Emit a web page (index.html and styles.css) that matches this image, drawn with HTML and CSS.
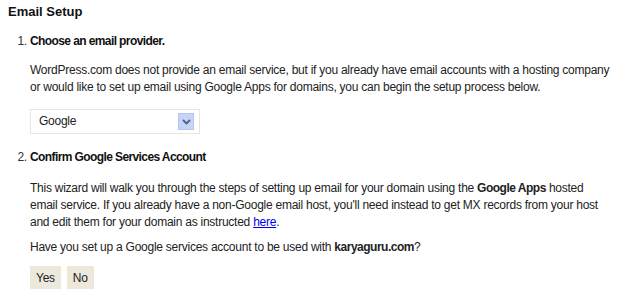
FILE: index.html
```html
<!DOCTYPE html>
<html lang="en">
<head>
 <meta charset="UTF-8" />
 <title>Email Setup</title>
 <link rel="stylesheet" href="styles.css">
</head>
<body>
 <h2 class="title">Email Setup</h2>

 <ol class="steps">
   <li>
     <h3>Choose an email provider.</h3>
     <p class="intro">WordPress.com does not provide an email service, but if you already have email accounts with a hosting company or would like to set up email using Google Apps for domains, you can begin the setup process below.</p>
     <div class="select">
       <span class="select-value">Google</span>
       <span class="select-arrow">
         <svg width="9" height="6" viewBox="0 0 9 6"><path d="M1 1 L4.5 4.5 L8 1" fill="none" stroke="#4d6185" stroke-width="1.8"/></svg>
       </span>
     </div>
   </li>
   <li>
     <h3>Confirm Google Services Account</h3>
     <p>This wizard will walk you through the steps of setting up email for your domain using the <b>Google Apps</b> hosted email service. If you already have a non-Google email host, you'll need instead to get MX records from your host and edit them for your domain as instructed <a href="#">here</a>.</p>
     <p class="question">Have you set up a Google services account to be used with <b>karyaguru.com</b>?</p>
     <div class="buttons">
       <button>Yes</button>
       <button>No</button>
     </div>
   </li>
 </ol>
</body>
</html>
```

FILE: styles.css
```css
* {
  margin: 0;
  padding: 0;
  box-sizing: border-box;
}

body {
  font-family: "Liberation Sans", Arial, sans-serif;
  font-size: 12px;
  letter-spacing: -0.25px;
  color: #222;
  background: #fff;
  padding: 4px 0 0 8px;
  line-height: 17px;
}

.title {
  font-size: 13px;
  font-weight: bold;
  letter-spacing: 0;
  color: #111;
  line-height: 16px;
}

.steps {
  margin-top: 13px;
  padding-left: 22px;
}

.steps li::marker {
  color: #333;
}

.steps h3 {
  font-size: 12px;
  font-weight: bold;
  letter-spacing: -0.6px;
  color: #111;
  margin-bottom: 12px;
}

.steps li + li h3 {
  margin-bottom: 14px;
}

.steps p {
  max-width: 578px;
  margin-bottom: 8px;
}

.steps p.intro {
  max-width: 584px;
  margin-bottom: 13px;
}

.steps p b {
  letter-spacing: -0.5px;
}

.steps .question {
  margin-bottom: 10px;
}

.select {
  width: 170px;
  height: 25px;
  border: 1px solid #e6e6e6;
  display: flex;
  align-items: center;
  justify-content: space-between;
  padding: 0 5px 0 8px;
  margin-bottom: 15px;
}

.select-arrow {
  width: 16px;
  height: 17px;
  background: #c6d4f7;
  border: 1px solid #b4c4ec;
  display: flex;
  align-items: center;
  justify-content: center;
}

a {
  color: #0000ee;
}

.buttons {
  display: flex;
  gap: 6px;
}

button {
  font-family: inherit;
  font-size: 12px;
  letter-spacing: inherit;
  color: #222;
  background: #ece9dc;
  border: none;
  height: 23px;
  padding: 0 6px;
}
```
